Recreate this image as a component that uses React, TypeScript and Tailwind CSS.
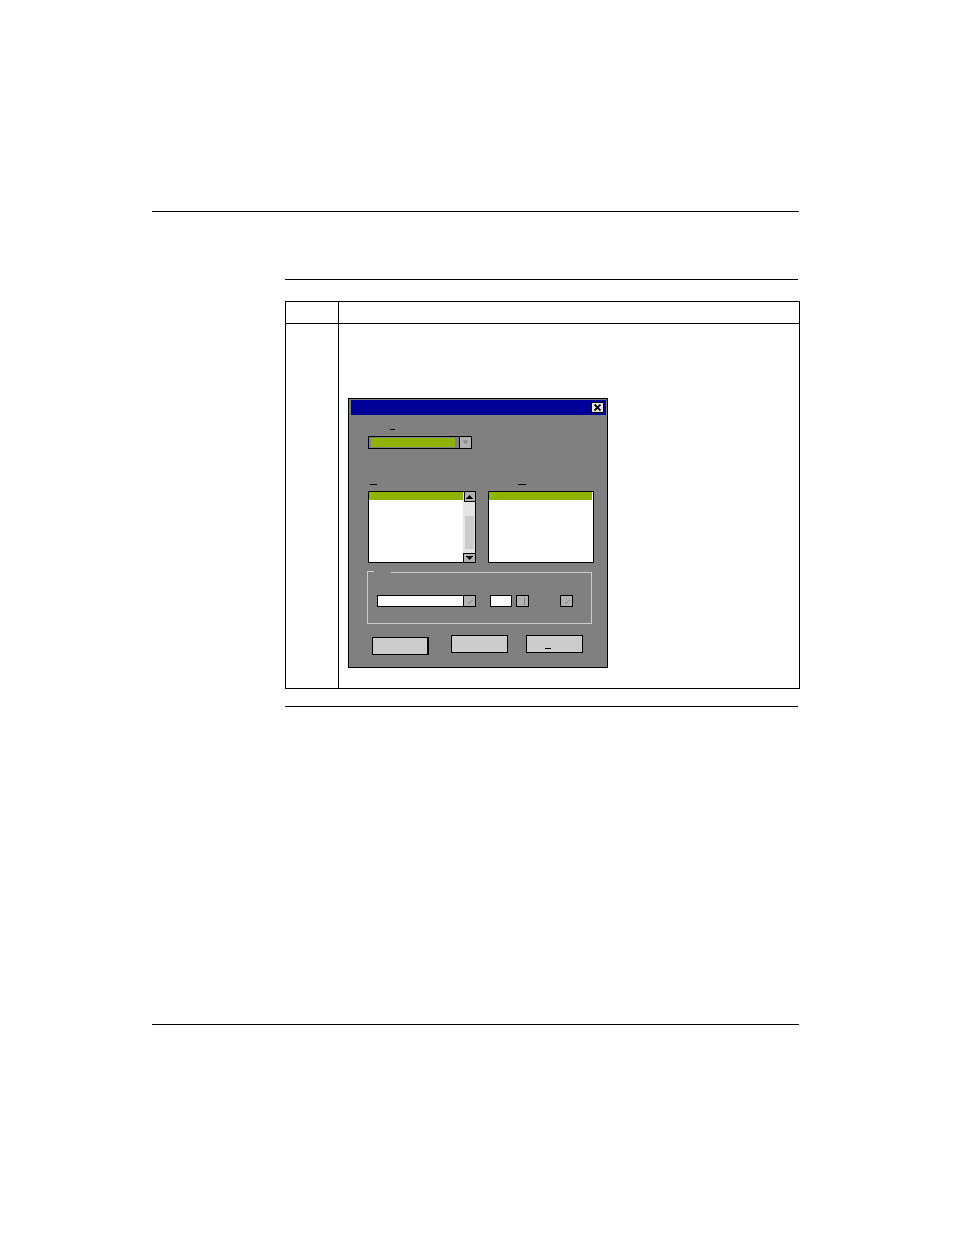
import type { ReactNode } from "react";

const rule = "h-px border-0 bg-black";

function Mnemonic({ className }: { className: string }) {
  return <span className={`block h-px bg-black ${className}`} />;
}

function SlashIcon() {
  return (
    <svg
      width="5"
      height="4"
      viewBox="0 0 5 4"
      shapeRendering="crispEdges"
      fill="none"
      className="mt-px mr-[2px]"
    >
      <path d="M0 3h2v1H0zM0 2h3v1H0zM2 1h2v1H2zM3 0h2v1H3z" fill="#999999" />
    </svg>
  );
}

function SmallButton({ label, children }: { label: string; children: ReactNode }) {
  return (
    <button
      type="button"
      aria-label={label}
      className="flex h-3 w-[13px] items-center justify-end border border-black bg-[#b2b2b2]"
    >
      {children}
    </button>
  );
}

function ListBox() {
  return (
    <div className="flex h-[72px] w-[108px] border border-black bg-white">
      <select
        id="available"
        size={6}
        className="h-full min-w-0 flex-1 appearance-none overflow-hidden bg-white p-0 text-[6px] outline-none"
      >
        <option aria-label="First entry" className="h-2 min-h-0 bg-[#8fb300] p-0 leading-[8px]" />
      </select>
      <div className="flex w-3 flex-col bg-[#e5e5e5]">
        <button
          type="button"
          aria-label="Scroll up"
          className="ml-px flex h-[10px] items-center justify-center border-b border-l border-black bg-[#b2b2b2]"
        >
          <svg width="8" height="4" viewBox="0 0 8 4">
            <path d="M3.5 0L7.2 4H-.2z" fill="#000" />
          </svg>
        </button>
        <div className="mx-auto mt-[14px] h-[33px] w-[9px] bg-[#cccccc]" />
        <button
          type="button"
          aria-label="Scroll down"
          className="mt-auto flex h-[9px] items-center justify-center border-t border-l border-black bg-[#b2b2b2]"
        >
          <svg width="7" height="4" viewBox="0 0 7 4">
            <path d="M3.5 4L7.2 0H-.2z" fill="#000" />
          </svg>
        </button>
      </div>
    </div>
  );
}

function Dialog() {
  return (
    <section
      role="dialog"
      aria-label="Settings"
      className="w-[260px] border border-black bg-[#808080] pt-px pb-3"
    >
      <header className="mr-px ml-[2px] flex h-[15px] items-center justify-end bg-[#000099] pr-[2px]">
        <button
          type="button"
          aria-label="Close"
          className="flex h-[11px] w-[13px] items-center justify-center border border-black bg-[#e5e5e5]"
        >
          <svg width="7" height="7" viewBox="0 0 7 7">
            <path d="M.5 .5L6.5 6.5M6.5 .5L.5 6.5" stroke="#000" strokeWidth="1.9" />
          </svg>
        </button>
      </header>

      <div className="pt-[14px] pr-[13px] pl-[18px]">
        <label htmlFor="category" aria-label="Category" className="mb-[6px] ml-[23px] block">
          <Mnemonic className="w-[5px]" />
        </label>
        <div className="ml-px flex h-[13px] w-[104px] border border-black">
          <select
            id="category"
            className="mt-px mr-1 ml-[2px] h-[9px] min-w-0 flex-1 appearance-none bg-[#8fb300] p-0 text-[6px] outline-none"
          >
            <option aria-label="Default" />
          </select>
          <button
            type="button"
            aria-label="Open category"
            className="flex w-3 items-center justify-center border-l border-black bg-[#b2b2b2]"
          >
            <svg width="5" height="5" viewBox="0 0 5 5" shapeRendering="crispEdges">
              <path d="M0 0h5v2H0z" fill="#999999" />
              <path d="M1 1h3v1H1zM1 2h3v1H1zM2 3h1v1H2z" fill="#858585" />
            </svg>
          </button>
        </div>

        <div className="mt-[35px] ml-px flex gap-3">
          <div>
            <label htmlFor="available" aria-label="Available" className="mb-[6px] ml-[2px] block">
              <Mnemonic className="w-[7px]" />
            </label>
            <ListBox />
          </div>
          <div>
            <label htmlFor="selected" aria-label="Selected" className="mb-[6px] ml-[30px] block">
              <Mnemonic className="w-2" />
            </label>
            <select
              id="selected"
              size={6}
              className="block h-[72px] w-[106px] appearance-none overflow-hidden border border-black bg-white p-0 pr-px text-[6px] outline-none"
            >
              <option aria-label="First entry" className="h-2 min-h-0 bg-[#8fb300] p-0 leading-[8px]" />
            </select>
          </div>
        </div>

        <fieldset aria-label="Options" className="mt-2 mr-[2px]">
          <div className="flex h-[2px]">
            <span className="w-[7px] border-t border-l border-[#cccccc]" />
            <span className="w-[17px]" />
            <span className="mt-px flex-1 border-t border-[#cccccc]" />
          </div>
          <div className="flex border-x border-b border-[#cccccc] pt-[22px] pb-4 pl-[9px]">
            <div className="flex h-3 w-[99px]">
              <input
                type="text"
                aria-label="Name"
                className="h-3 w-[86px] flex-1 border border-r-0 border-black bg-white text-[8px] outline-none"
              />
              <SmallButton label="Browse names">
                <SlashIcon />
              </SmallButton>
            </div>
            <input
              type="text"
              aria-label="Count"
              className="ml-[14px] h-3 w-[22px] border border-black bg-white text-[8px] outline-none"
            />
            <div className="ml-1">
              <SmallButton label="Adjust count">
                <span className="mr-[3px] h-[7px] w-px bg-[#808080]" />
              </SmallButton>
            </div>
            <div className="ml-[31px]">
              <SmallButton label="Edit">
                <SlashIcon />
              </SmallButton>
            </div>
          </div>
        </fieldset>

        <div className="mt-[11px] ml-[5px] flex">
          <button
            type="button"
            aria-label="OK"
            className="mt-[2px] h-[18px] w-[57px] border border-r-2 border-black bg-[#cccccc]"
          />
          <button
            type="button"
            aria-label="Cancel"
            className="ml-[22px] h-[18px] w-[57px] border border-black bg-[#cccccc]"
          />
          <button
            type="button"
            aria-label="Help"
            className="ml-[18px] flex h-[18px] w-[57px] items-end border border-black bg-[#cccccc] pb-[3px] pl-[18px]"
          >
            <Mnemonic className="w-[6px]" />
          </button>
        </div>
      </div>
    </section>
  );
}

export default function App() {
  return (
    <div className="min-h-screen bg-white pt-[211px] pr-[155px] pb-[210px] pl-[152px] font-['Liberation_Sans',sans-serif]">
      <hr className={rule} />
      <main className="mt-[67px] ml-[133px]">
        <hr className={`mr-px ${rule}`} />
        <div className="mt-[21px] -mr-px">
          <table className="w-full table-fixed border-separate border-spacing-0 border border-black">
            <colgroup>
              <col className="w-[53px]" />
              <col />
            </colgroup>
            <thead>
              <tr>
                <th scope="col" aria-label="Step" className="h-[22px] border-r border-b border-black p-0" />
                <th scope="col" aria-label="Action" className="h-[22px] border-b border-black p-0" />
              </tr>
            </thead>
            <tbody>
              <tr>
                <td className="border-r border-black p-0" />
                <td className="p-0 pt-[74px] pb-5 pl-[9px] align-top">
                  <Dialog />
                </td>
              </tr>
            </tbody>
          </table>
        </div>
        <hr className={`mt-[17px] mr-px ${rule}`} />
      </main>
      <hr className={`mt-[317px] ${rule}`} />
    </div>
  );
}
